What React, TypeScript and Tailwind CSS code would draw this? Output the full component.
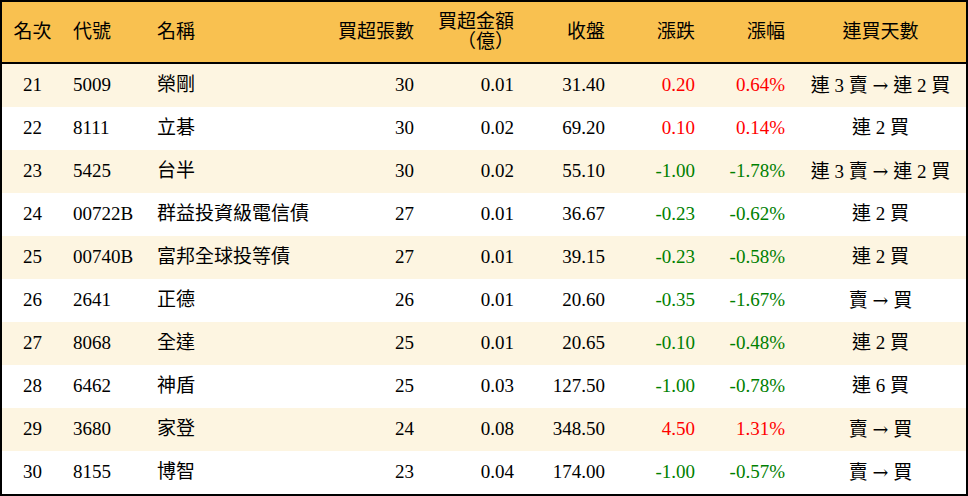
import React from "react";

type Row = {
  rank: number;
  code: string;
  name: string;
  lots: number;
  amount: string;
  close: string;
  change: string;
  pct: string;
  streak: string;
};

const rows: Row[] = [
  { rank: 21, code: "5009", name: "榮剛", lots: 30, amount: "0.01", close: "31.40", change: "0.20", pct: "0.64%", streak: "連 3 賣 → 連 2 買" },
  { rank: 22, code: "8111", name: "立碁", lots: 30, amount: "0.02", close: "69.20", change: "0.10", pct: "0.14%", streak: "連 2 買" },
  { rank: 23, code: "5425", name: "台半", lots: 30, amount: "0.02", close: "55.10", change: "-1.00", pct: "-1.78%", streak: "連 3 賣 → 連 2 買" },
  { rank: 24, code: "00722B", name: "群益投資級電信債", lots: 27, amount: "0.01", close: "36.67", change: "-0.23", pct: "-0.62%", streak: "連 2 買" },
  { rank: 25, code: "00740B", name: "富邦全球投等債", lots: 27, amount: "0.01", close: "39.15", change: "-0.23", pct: "-0.58%", streak: "連 2 買" },
  { rank: 26, code: "2641", name: "正德", lots: 26, amount: "0.01", close: "20.60", change: "-0.35", pct: "-1.67%", streak: "賣 → 買" },
  { rank: 27, code: "8068", name: "全達", lots: 25, amount: "0.01", close: "20.65", change: "-0.10", pct: "-0.48%", streak: "連 2 買" },
  { rank: 28, code: "6462", name: "神盾", lots: 25, amount: "0.03", close: "127.50", change: "-1.00", pct: "-0.78%", streak: "連 6 買" },
  { rank: 29, code: "3680", name: "家登", lots: 24, amount: "0.08", close: "348.50", change: "4.50", pct: "1.31%", streak: "賣 → 買" },
  { rank: 30, code: "8155", name: "博智", lots: 23, amount: "0.04", close: "174.00", change: "-1.00", pct: "-0.57%", streak: "賣 → 買" },
];

const cols = "grid grid-cols-[61px_87px_180px_94px_100px_91px_90px_90px_171px]";

// arrow glyph in the reference is a longer serif arrow
const Streak: React.FC<{ text: string }> = ({ text }) => {
  const parts = text.split("→");
  return (
    <>
      {parts.map((p, i) => (
        <React.Fragment key={i}>
          {i > 0 && <span style={{ fontFamily: '"DejaVu Serif", serif' }}>→</span>}
          {p}
        </React.Fragment>
      ))}
    </>
  );
};

const App: React.FC = () => {
  return (
    <div
      className="w-[968px] h-[496px] bg-white border-2 border-black text-[19px] text-black"
      style={{ fontFamily: '"Liberation Serif", "Noto Sans CJK TC", serif' }}
    >
      {/* header */}
      <div className={`${cols} h-[62px] bg-[#f9c150] border-b-2 border-black items-center`}>
        <div className="text-center">名次</div>
        <div className="pl-[10px]">代號</div>
        <div className="pl-[7px]">名稱</div>
        <div className="text-right pr-[10px]">買超張數</div>
        <div className="text-right pr-[10px] leading-[20px]">
          <div>買超金額</div>
          <div>（億）</div>
        </div>
        <div className="text-right pr-[10px]">收盤</div>
        <div className="text-right pr-[10px]">漲跌</div>
        <div className="text-right pr-[10px]">漲幅</div>
        <div className="text-center">連買天數</div>
      </div>
      {/* rows */}
      {rows.map((r, i) => {
        const up = !r.change.startsWith("-");
        const color = up ? "text-[#ff0000]" : "text-[#008000]";
        return (
          <div
            key={r.rank}
            className={`${cols} h-[43px] items-center ${i % 2 === 0 ? "bg-[#fdf5e1]" : "bg-white"}`}
          >
            <div className="text-center">{r.rank}</div>
            <div className="pl-[10px]">{r.code}</div>
            <div className="pl-[7px]">{r.name}</div>
            <div className="text-right pr-[10px]">{r.lots}</div>
            <div className="text-right pr-[10px]">{r.amount}</div>
            <div className="text-right pr-[10px]">{r.close}</div>
            <div className={`text-right pr-[10px] ${color}`}>{r.change}</div>
            <div className={`text-right pr-[10px] ${color}`}>{r.pct}</div>
            <div className="text-center whitespace-nowrap">
              <Streak text={r.streak} />
            </div>
          </div>
        );
      })}
    </div>
  );
};

export default App;
